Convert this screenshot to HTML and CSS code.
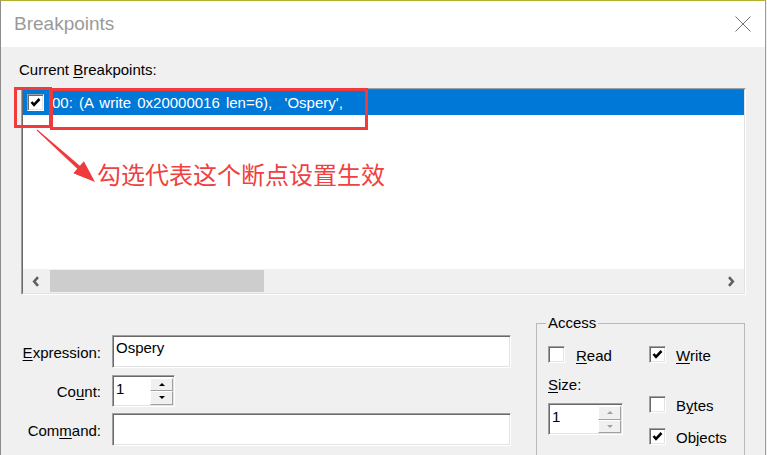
FILE: index.html
```html
<!DOCTYPE html>
<html>
<head>
  <title>Breakpoints</title>
  <link rel="stylesheet" href="styles.css">
</head>
<body>
  <div class="window">
    <div class="titlebar">
      <span class="title">Breakpoints</span>
      <svg class="close" width="16" height="16" viewBox="0 0 16 16">
        <path d="M0.5 0.5 L15.5 15.5 M15.5 0.5 L0.5 15.5" stroke="#707070" stroke-width="1" fill="none"/>
      </svg>
    </div>

    <div class="content">
      <div class="caption">Current <u>B</u>reakpoints:</div>
      <div class="listbox">
        <div class="listbox-inner">
          <div class="row selected">
            <span class="box">
              <svg width="13" height="13" viewBox="0 0 13 13"><polyline points="2.5,6 5,8.8 10.5,3" stroke="#000" stroke-width="2.6" fill="none"/></svg>
            </span>
            <span class="row-text">00: (A write 0x20000016 len=6),&nbsp; 'Ospery',</span>
          </div>
          <div class="filler"></div>
          <div class="hscroll">
            <div class="arrow-btn">
              <svg width="8" height="11" viewBox="0 0 8 11"><polyline points="6,1.2 2.2,5.5 6,9.8" stroke="#606060" stroke-width="2.6" fill="none"/></svg>
            </div>
            <div class="thumb"></div>
            <div class="track"></div>
            <div class="arrow-btn">
              <svg width="8" height="11" viewBox="0 0 8 11"><polyline points="2,1.2 5.8,5.5 2,9.8" stroke="#606060" stroke-width="2.6" fill="none"/></svg>
            </div>
          </div>
        </div>
      </div>

      <div class="form">
        <div class="fields">
          <label class="field-label"><u>E</u>xpression:</label>
          <div class="edit">Ospery</div>

          <label class="field-label">Co<u>u</u>nt:</label>
          <div class="spin count-spin">
            <div class="spin-text">1</div>
            <div class="spin-btns">
              <div class="spin-btn"><span class="tri-up"></span></div>
              <div class="spin-btn"><span class="tri-down"></span></div>
            </div>
          </div>

          <label class="field-label">Com<u>m</u>and:</label>
          <div class="edit"></div>
        </div>

        <fieldset class="group">
          <legend>Access</legend>
          <div class="group-cols">
            <div class="col col-left">
              <div class="opt">
                <span class="box"></span>
                <span class="opt-label"><u>R</u>ead</span>
              </div>
              <div class="size-label"><u>S</u>ize:</div>
              <div class="spin size-spin">
                <div class="spin-text">1</div>
                <div class="spin-btns disabled">
                  <div class="spin-btn"><span class="tri-up"></span></div>
                  <div class="spin-btn"><span class="tri-down"></span></div>
                </div>
              </div>
            </div>
            <div class="col col-right">
              <div class="opt">
                <span class="box">
                  <svg width="13" height="13" viewBox="0 0 13 13"><polyline points="2.5,6 5,8.8 10.5,3" stroke="#000" stroke-width="2.6" fill="none"/></svg>
                </span>
                <span class="opt-label"><u>W</u>rite</span>
              </div>
              <div class="opt bytes">
                <span class="box"></span>
                <span class="opt-label">B<u>y</u>tes</span>
              </div>
              <div class="opt objects">
                <span class="box">
                  <svg width="13" height="13" viewBox="0 0 13 13"><polyline points="2.5,6 5,8.8 10.5,3" stroke="#000" stroke-width="2.6" fill="none"/></svg>
                </span>
                <span class="opt-label">Ob<u>j</u>ects</span>
              </div>
            </div>
          </div>
        </fieldset>
      </div>
    </div>

    <!-- red annotation drawn over the dialog -->
    <div class="mark mark-check"></div>
    <div class="mark mark-row"></div>
    <svg class="mark-arrow" width="120" height="200" viewBox="0 0 120 200">
      <polygon points="36.3,128.6 78.9,164.8 82.9,160.3 94,181 72.3,172.3 76.3,167.8 35.7,129.4" fill="#ef3b3b"/>
    </svg>
    <div class="note">勾选代表这个断点设置生效</div>
  </div>
</body>
</html>
```

FILE: styles.css
```css
/* Breakpoints dialog */
* {
  box-sizing: border-box;
}
body {
  margin: 0;
  background: #f0f0f0;
  font-family: "Liberation Sans", Arial, sans-serif;
  font-size: 15px;
  color: #000;
}
u {
  text-decoration-thickness: 1px;
  text-underline-offset: 2px;
}
.window {
  position: relative;
  width: 766px;
  height: 455px;
  overflow: hidden;
  background: #f0f0f0;
  border-top: 1px solid #b2b22c;
  border-left: 1px solid #8c8c8c;
  border-right: 1px solid #9c9c9c;
}
.titlebar {
  height: 46px;
  background: #fff;
  display: flex;
  align-items: center;
  justify-content: space-between;
  padding: 0 14px 0 13px;
}
.title {
  font-size: 19px;
  color: #9a9a9a;
}

/* list of breakpoints */
.caption {
  margin-top: 14px;
  padding-left: 18px;
  line-height: 18px;
}
.listbox {
  margin: 9px 0 0 20px;
  width: 725px;
  height: 207px;
  border: 1px solid;
  border-color: #a0a0a0 #fff #fff #a0a0a0;
}
.listbox-inner {
  height: 100%;
  display: flex;
  flex-direction: column;
  background: #fff;
  border: 1px solid;
  border-color: #696969 #e3e3e3 #e3e3e3 #696969;
}
.row {
  height: 25px;
  display: flex;
  align-items: center;
  flex-shrink: 0;
}
.row.selected {
  background: #0078d7;
  color: #fff;
}
.row .box {
  margin-left: 4px;
}
.row-text {
  margin-left: 8px;
  white-space: pre;
  word-spacing: 2px;
}
.filler {
  flex: 1;
}
.hscroll {
  height: 24px;
  display: flex;
  background: #f0f0f0;
  flex-shrink: 0;
}
.arrow-btn {
  width: 26px;
  display: flex;
  align-items: center;
  justify-content: center;
}
.thumb {
  width: 214px;
  height: 22px;
  margin: 1px 0 0 1px;
  background: #cdcdcd;
}
.track {
  flex: 1;
}

/* check boxes */
.box {
  width: 17px;
  height: 17px;
  flex-shrink: 0;
  display: flex;
  align-items: center;
  justify-content: center;
  background: #fff;
  border: 1px solid;
  border-color: #a0a0a0 #fff #fff #a0a0a0;
  box-shadow: inset 1px 1px 0 #696969, inset -1px -1px 0 #e3e3e3;
}

/* lower form */
.form {
  display: flex;
  align-items: flex-start;
  margin-top: 19px;
}
.fields {
  display: grid;
  grid-template-columns: 100px 399px;
  grid-auto-rows: 33px;
  column-gap: 11px;
  row-gap: 6px;
  align-items: center;
  padding-top: 21px;
}
.field-label {
  text-align: right;
  padding-top: 2px;
}
.edit,
.spin {
  height: 33px;
  background: #fff;
  border: 1px solid;
  border-color: #a0a0a0 #fff #fff #a0a0a0;
  box-shadow: inset 1px 1px 0 #696969, inset -1px -1px 0 #e3e3e3;
  padding: 3px 0 0 3px;
}
.spin {
  display: flex;
  padding: 2px 1px 1px 2px;
}
.count-spin {
  width: 63px;
  height: 32px;
}
.spin-text {
  flex: 1;
  padding: 2px 0 0 1px;
}
.spin-btns {
  width: 23px;
  display: flex;
  flex-direction: column;
}
.spin-btn {
  flex: 1;
  display: flex;
  align-items: center;
  justify-content: center;
  background: #f0f0f0;
  border: 1px solid;
  border-color: #fff #a0a0a0 #a0a0a0 #fff;
}
.tri-up,
.tri-down {
  width: 0;
  height: 0;
  border-left: 3px solid transparent;
  border-right: 3px solid transparent;
}
.tri-up {
  border-bottom: 3px solid #000;
}
.tri-down {
  border-top: 3px solid #000;
}
.disabled .tri-up {
  border-bottom-color: #a0a0a0;
}
.disabled .tri-down {
  border-top-color: #a0a0a0;
}

.group {
  margin: 0 0 0 25px;
  width: 209px;
  height: 170px;
  border: 1px solid #b9b9b9;
  padding: 14px 0 0 11px;
}
.group legend {
  padding: 0 2px;
  margin-left: -2px;
  line-height: 18px;
}
.group-cols {
  display: flex;
}
.col-left {
  width: 101px;
}
.opt {
  display: flex;
  align-items: center;
  height: 17px;
}
.opt-label {
  margin-left: 10px;
  padding-top: 2px;
}
.col-left .opt-label {
  margin-left: 11px;
}
.size-label {
  margin-top: 13px;
  line-height: 18px;
}
.size-spin {
  margin-top: 9px;
  width: 75px;
  height: 32px;
}
.opt.bytes {
  margin-top: 33px;
}
.opt.objects {
  margin-top: 15px;
}

/* red annotation on top of the screenshot */
.mark {
  position: absolute;
  border: 3px solid #ef3b3b;
}
.mark-check {
  left: 13px;
  top: 86px;
  width: 38px;
  height: 41px;
}
.mark-row {
  left: 49px;
  top: 87px;
  width: 318px;
  height: 42px;
}
.mark-arrow {
  position: absolute;
  left: 0;
  top: 0;
}
.note {
  position: absolute;
  left: 96px;
  top: 160px;
  font-family: "Noto Sans CJK SC", sans-serif;
  font-size: 24px;
  line-height: 26px;
  color: #f04040;
}
```
